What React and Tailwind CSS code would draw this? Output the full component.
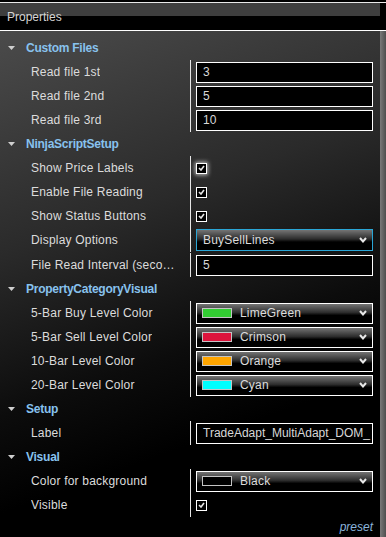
import React from 'react';

const font = { fontFamily: '"Liberation Sans", Arial, sans-serif' };

const Check = ({ glow }) => (
  <div
    className={`w-[11px] h-[11px] border border-white bg-black flex items-center justify-center ${
      glow ? 'shadow-[0_0_4px_1px_rgba(255,255,255,0.7)]' : ''
    }`}
  >
    <svg width="7" height="6" viewBox="0 0 7 6">
      <polyline points="1,3 3,5 6,1" fill="none" stroke="#e4e4e4" strokeWidth="1.6" />
    </svg>
  </div>
);

const Chevron = () => (
  <svg width="8" height="6" viewBox="0 0 8 6" className="ml-auto mr-[5px]">
    <polyline points="1,1 4,4.5 7,1" fill="none" stroke="#e8e8e8" strokeWidth="2" />
  </svg>
);

const TextBox = ({ value }) => (
  <div className="w-[177px] h-[21px] border border-white bg-black pl-[6px] flex items-center text-[#d8d8d8] overflow-hidden whitespace-nowrap">
    {value}
  </div>
);

const gloss = 'bg-[linear-gradient(to_bottom,#747474_0%,#2c2c2c_45%,#000_60%,#000_100%)]';

const ColorBox = ({ swatch, name }) => (
  <div className={`w-[177px] h-[21px] border border-white ${gloss} flex items-center text-[#dcdcdc] tracking-[0.2px]`}>
    <div className={`ml-[5px] w-[30px] h-[10px] border border-[#c4c4c4] ${swatch}`} />
    <span className="ml-[8px]">{name}</span>
    <Chevron />
  </div>
);

const Category = ({ title }) => (
  <div className="flex h-6 items-center">
    <svg width="7" height="4" viewBox="0 0 7 4" className="ml-[8px]">
      <polygon points="0,0 7,0 3.5,4" fill="#cfcfcf" />
    </svg>
    <span className="ml-[11px] font-bold tracking-[-0.25px] text-[#88c2ee]">{title}</span>
  </div>
);

const Row = ({ label, children }) => (
  <div className="flex h-6">
    <div className="w-[191px] shrink-0 border-r border-[#e6e6e6] pl-[31px] pr-[9px] flex items-center text-[#dcdcdc] tracking-[0.2px] overflow-hidden">
      <span className="truncate">{label}</span>
    </div>
    <div className="flex-1 flex items-center pl-[5px]">{children}</div>
  </div>
);

export default function App() {
  return (
    <div className="w-[386px] h-[537px] bg-black overflow-hidden flex flex-col text-[12px]" style={font}>
      <div className="h-[2px] bg-black" />
      <div className="h-px bg-[#e8e8e8]" />
      <div className="flex h-[27px]">
        <div className="flex-1 bg-[linear-gradient(to_bottom,#3e3e3e_0%,#3e3e3e_48%,#000_48%,#000_100%)] flex items-center pl-[7px] text-[#d4d4d4]">
          Properties
        </div>
        <div className="w-[6px] bg-black" />
      </div>
      <div className="h-px bg-white" />
      <div className="flex flex-1">
        <div className="flex-1 pt-[5px] bg-[linear-gradient(160deg,#4b4b4b_0%,#2a2a2a_35%,#0c0c0c_60%,#000_75%)]">
          <Category title="Custom Files" />
          <Row label="Read file 1st"><TextBox value="3" /></Row>
          <Row label="Read file 2nd"><TextBox value="5" /></Row>
          <Row label="Read file 3rd"><TextBox value="10" /></Row>

          <Category title="NinjaScriptSetup" />
          <Row label="Show Price Labels"><Check glow /></Row>
          <Row label="Enable File Reading"><Check /></Row>
          <Row label="Show Status Buttons"><Check /></Row>
          <Row label="Display Options">
            <div className={`w-[177px] h-[22px] border border-[#2aa6d6] ${gloss} flex items-center pl-[6px] text-[#dcdcdc] tracking-[0.2px]`}>
              BuySellLines
              <Chevron />
            </div>
          </Row>
          <div className="h-px" />
          <Row label="File Read Interval (seconds)"><TextBox value="5" /></Row>

          <Category title="PropertyCategoryVisual" />
          <Row label="5-Bar Buy Level Color"><ColorBox swatch="bg-[#32cd32]" name="LimeGreen" /></Row>
          <Row label="5-Bar Sell Level Color"><ColorBox swatch="bg-[#dc143c]" name="Crimson" /></Row>
          <Row label="10-Bar Level Color"><ColorBox swatch="bg-[#ffa500]" name="Orange" /></Row>
          <Row label="20-Bar Level Color"><ColorBox swatch="bg-[#00ffff]" name="Cyan" /></Row>

          <Category title="Setup" />
          <Row label="Label"><TextBox value="TradeAdapt_MultiAdapt_DOM_" /></Row>

          <Category title="Visual" />
          <Row label="Color for background"><ColorBox swatch="bg-black" name="Black" /></Row>
          <Row label="Visible"><Check /></Row>

          <div className="h-[20px] flex items-center justify-end pr-[7px] italic text-[#8ab4dc]">preset</div>
        </div>
        <div className="w-[6px] bg-[linear-gradient(to_right,#7a7a7a,#4e4e4e)]" />
      </div>
    </div>
  );
}
